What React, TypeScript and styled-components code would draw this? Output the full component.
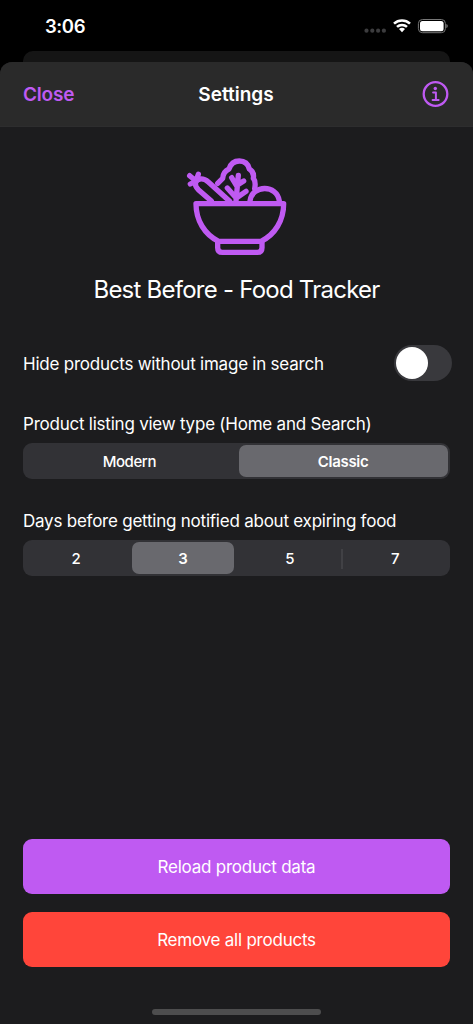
import React, { useState } from "react";
import styled, { createGlobalStyle } from "styled-components";

const Global = createGlobalStyle`
  * { box-sizing: border-box; }
  body { margin: 0; background: #000; }
  button { border: 0; padding: 0; margin: 0; background: none; font: inherit; color: inherit; }
`;

const Screen = styled.div`
  width: 473px;
  height: 1024px;
  display: flex;
  flex-direction: column;
  background: #000;
  color: #fff;
  font-family: Inter, "Liberation Sans", sans-serif;
  overflow: hidden;
`;

const StatusBar = styled.header`
  height: 51px;
  flex: none;
  display: flex;
  align-items: center;
  justify-content: space-between;
  padding: 0 25px 0 45px;
`;

const Clock = styled.span`
  padding-top: 2px;
  font-size: 18.5px;
  font-weight: 600;
  line-height: 21px;
  letter-spacing: -0.4px;
`;

const CardBehind = styled.div`
  height: 11px;
  flex: none;
  margin: 0 23px;
  border-radius: 10px 10px 0 0;
  background: #151515;
`;

const Sheet = styled.main`
  flex: 1;
  display: flex;
  flex-direction: column;
  border-radius: 12px 12px 0 0;
  background: #1c1c1e;
  overflow: hidden;
`;

const NavBar = styled.nav`
  height: 65px;
  flex: none;
  display: grid;
  grid-template-columns: 1fr auto 1fr;
  align-items: center;
  padding: 0 24px 0 23px;
  background: #2a2a2a;
  border-bottom: 1px solid #2d2d2e;
`;

const CloseButton = styled.button`
  justify-self: start;
  padding-top: 2px;
  color: #bf5af2;
  font-size: 19px;
  font-weight: 600;
  line-height: 24px;
  letter-spacing: -0.2px;
`;

const NavTitle = styled.h1`
  margin: 0;
  padding-top: 2px;
  font-size: 19px;
  font-weight: 600;
  line-height: 24px;
  letter-spacing: 0;
`;

const InfoButton = styled.button`
  justify-self: end;
  display: flex;
`;

const Content = styled.div`
  flex: 1;
  display: flex;
  flex-direction: column;
  padding: 18px 23px 12px;
`;

const Brand = styled.section`
  display: flex;
  flex-direction: column;
  align-items: center;
`;

const AppName = styled.h2`
  margin: 10px 0 0;
  font-size: 24px;
  font-weight: 400;
  line-height: 30px;
  letter-spacing: -0.76px;
`;

const ToggleRow = styled.div`
  display: flex;
  align-items: center;
  justify-content: space-between;
  height: 36px;
  margin: 40px -2px 0 0;
`;

const Label = styled.span`
  display: block;
  font-size: 17px;
  line-height: 22px;
  letter-spacing: -0.23px;
  white-space: nowrap;
`;

const ToggleLabel = styled(Label)`
  padding-top: 2px;
`;

const Switch = styled.button<{ $on: boolean }>`
  display: flex;
  width: 58px;
  height: 36px;
  padding: 2px;
  border-radius: 18px;
  justify-content: ${(p) => (p.$on ? "flex-end" : "flex-start")};
  background: ${(p) => (p.$on ? "#bf5af2" : "#39393d")};
`;

const Knob = styled.span`
  width: 32px;
  height: 32px;
  border-radius: 50%;
  background: #fff;
`;

const Field = styled.section<{ $top: number }>`
  margin-top: ${(p) => p.$top}px;
`;

const Segments = styled.div`
  display: flex;
  height: 36px;
  margin-top: 8px;
  padding: 2px 2.5px 2px 2px;
  border-radius: 9px;
  background: #323236;
`;

const Segment = styled.button<{ $active: boolean; $divided: boolean }>`
  flex: 1;
  display: flex;
  align-items: center;
  justify-content: center;
  margin-left: 5px;
  padding-top: 1px;
  border-radius: 7px;
  font-size: 15px;
  line-height: 20px;
  letter-spacing: ${(p) => (p.$active ? "-0.3px" : "-0.4px")};
  font-weight: ${(p) => (p.$active ? 600 : 500)};
  background: ${(p) => (p.$active ? "#69696e" : "transparent")};
  &:first-child { margin-left: 0; }
  &::before {
    content: "";
    display: ${(p) => (p.$divided ? "block" : "none")};
    width: 2px;
    height: 20px;
    margin: 0 auto 0 -5px;
    background: #414145;
  }
  &::after {
    content: "";
    display: ${(p) => (p.$divided ? "block" : "none")};
    margin-left: auto;
  }
`;

const Actions = styled.div`
  display: flex;
  flex-direction: column;
  gap: 18px;
  margin-top: auto;
`;

const ActionButton = styled.button<{ $color: string }>`
  height: 55px;
  border-radius: 9px;
  background: ${(p) => p.$color};
  font-size: 17px;
  line-height: 22px;
  letter-spacing: -0.23px;
`;

const HomeIndicator = styled.div`
  width: 169px;
  height: 6px;
  flex: none;
  align-self: center;
  margin: 42px 0 -3px;
  border-radius: 3px;
  background: #4d4d4e;
`;

const StatusIcons = () => (
  <svg width="84" height="19" viewBox="0 0 84 19" fill="none">
    <g fill="#3c3c3e">
      <circle cx="2.5" cy="14.7" r="2.1" />
      <circle cx="8.3" cy="14.7" r="2.1" />
      <circle cx="14.1" cy="14.7" r="2.1" />
      <circle cx="19.9" cy="14.7" r="2.1" />
    </g>
    <g stroke="#fff" strokeWidth="2.6">
      <path d="M30 7.6A11.8 11.8 0 0 1 46 7.6" />
      <path d="M33 10.9A7.4 7.4 0 0 1 43 10.9" />
    </g>
    <path d="M35 13.1A4.3 4.3 0 0 1 41 13.1L38 16.3Z" fill="#fff" />
    <rect x="54.4" y="3.5" width="27" height="13.2" rx="4" stroke="#777" />
    <rect x="56" y="5" width="23.6" height="10.2" rx="2.5" fill="#fff" />
    <path d="M82.3 8q1.5.5 1.5 2.1t-1.5 2.1Z" fill="#777" />
  </svg>
);

const InfoIcon = () => (
  <svg width="27" height="27" viewBox="0 0 27 27" fill="none" stroke="#bf5af2">
    <circle cx="13.5" cy="13" r="11.8" strokeWidth="2.3" />
    <circle cx="13.3" cy="7.5" r="1.7" fill="#bf5af2" stroke="none" />
    <path d="M11.1 11.6h2.8v7M10.6 18.9h6" strokeWidth="2" strokeLinecap="round" strokeLinejoin="round" />
  </svg>
);

const BowlIcon = () => (
  <svg
    width="120"
    height="120"
    viewBox="0 0 360 360"
    fill="none"
    stroke="#bf5af2"
    strokeWidth="16"
    strokeLinecap="round"
    strokeLinejoin="round"
  >
    <path d="M57 176H320C320 226 294 269 252 289H125C83 269 57 226 57 176Z" />
    <path d="M122 290V308Q122 322 136 322H241Q255 322 255 308V290" />
    <path d="M103 168L64 134C50 120 53 106 70 102C80 101 86 104 94 111L158 169" />
    <path d="M38 92L57 108L64 88M40 117L57 108" />
    <path d="M122 115L137 100C138 86 145 77 156 72C161 56 171 48 187 48C203 48 213 56 217 72C227 78 231 89 229 100C235 107 236 116 233 131" />
    <path d="M184 91L177 168M179 123L164 98M180 121L200 108M177 158L151 129M178 159L207 139" />
    <path d="M219 168C225 119 300 117 307 168" />
  </svg>
);

const viewTypes = ["Modern", "Classic"];
const dayOptions = ["2", "3", "5", "7"];

interface SegmentedProps {
  options: string[];
  initial: number;
}

function SegmentedControl({ options, initial }: SegmentedProps) {
  const [selected, setSelected] = useState(initial);
  return (
    <Segments>
      {options.map((option, i) => (
        <Segment
          key={option}
          $active={i === selected}
          $divided={i > 0 && i !== selected && i - 1 !== selected}
          onClick={() => setSelected(i)}
        >
          {option}
        </Segment>
      ))}
    </Segments>
  );
}

export default function App() {
  const [hidden, setHidden] = useState(false);
  return (
    <Screen>
      <Global />
      <StatusBar>
        <Clock>3:06</Clock>
        <StatusIcons />
      </StatusBar>
      <CardBehind />
      <Sheet>
        <NavBar>
          <CloseButton>Close</CloseButton>
          <NavTitle>Settings</NavTitle>
          <InfoButton aria-label="Info">
            <InfoIcon />
          </InfoButton>
        </NavBar>
        <Content>
          <Brand>
            <BowlIcon />
            <AppName>Best Before - Food Tracker</AppName>
          </Brand>
          <ToggleRow>
            <ToggleLabel>Hide products without image in search</ToggleLabel>
            <Switch $on={hidden} aria-label="Hide products" onClick={() => setHidden(!hidden)}>
              <Knob />
            </Switch>
          </ToggleRow>
          <Field $top={32}>
            <Label>Product listing view type (Home and Search)</Label>
            <SegmentedControl options={viewTypes} initial={1} />
          </Field>
          <Field $top={31}>
            <Label>Days before getting notified about expiring food</Label>
            <SegmentedControl options={dayOptions} initial={1} />
          </Field>
          <Actions>
            <ActionButton $color="#bf5af2">Reload product data</ActionButton>
            <ActionButton $color="#ff453a">Remove all products</ActionButton>
          </Actions>
          <HomeIndicator />
        </Content>
      </Sheet>
    </Screen>
  );
}
